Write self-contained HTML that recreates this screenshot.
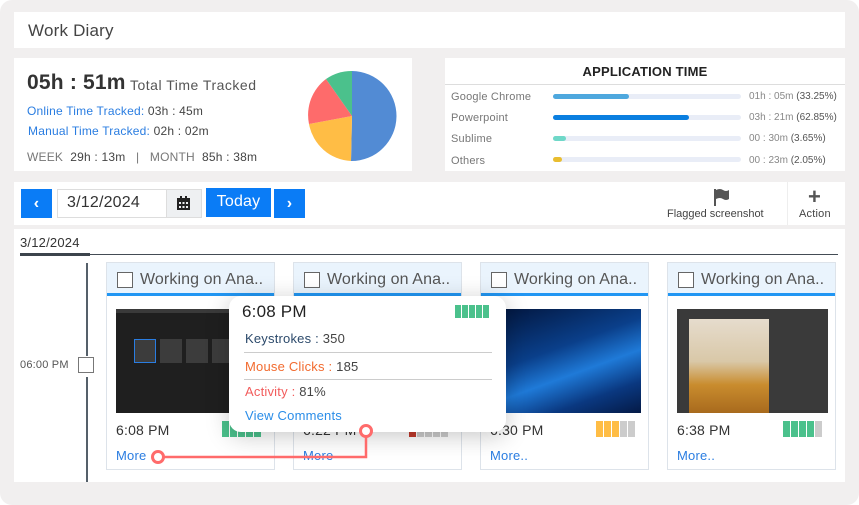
<!DOCTYPE html>
<html><head><meta charset="utf-8"><style>
*{box-sizing:border-box;margin:0;padding:0}
body{width:859px;height:505px;background:#fff;font-family:"Liberation Sans",sans-serif;position:relative;overflow:hidden;color:#333;letter-spacing:0.2px}
.bg{position:absolute;left:0;top:0;width:859px;height:505px;background:#f1efef;border-radius:12px}
.w{position:absolute;background:#fff}
.a{position:absolute;white-space:nowrap}
.btn{position:absolute;background:#0a7cf6;color:#fff;text-align:center}
.card{position:absolute;top:262px;width:169px;height:208px;border:1px solid #dde3ea;background:#fff}
.card .h{height:33px;background:#eaf4fd;border-bottom:3px solid #2196f3;position:relative}
.card .cb{position:absolute;left:10px;top:9px;width:16px;height:16px;border:1.5px solid #666;background:#fff}
.card .t{position:absolute;left:33px;top:8px;font-size:16px;color:#555;letter-spacing:0.1px}
.card .img{position:absolute;left:9px;top:46px;width:151px;height:104px;overflow:hidden}
.card .tm{position:absolute;left:9px;top:159px;font-size:14px;color:#333}
.card .mo{position:absolute;left:9px;top:185px;font-size:13px;color:#2a7de1}
.bars{position:absolute;left:115px;top:158px;display:flex;gap:1px}
.bars i{display:block;width:7px;height:16px}
.bar{position:absolute;height:5px;border-radius:3px;background:#e9edf7;left:553px;width:188px}
.bar b{display:block;height:5px;border-radius:3px}
</style></head><body>
<div class="bg"></div>
<div class="w" style="left:14px;top:12px;width:831px;height:36px"></div>
<div class="a" style="left:28px;top:21px;font-size:17px;color:#444">Work Diary</div>

<div class="w" style="left:14px;top:58px;width:398px;height:113px"></div>
<div class="a" style="left:27px;top:71px;font-size:21px;font-weight:bold;color:#333">05h : 51m</div>
<div class="a" style="left:130px;top:77px;font-size:14px;color:#555;letter-spacing:0.5px">Total Time Tracked</div>
<div class="a" style="left:27px;top:104px;font-size:12px;color:#2a7de1">Online Time Tracked: <span style="color:#444">03h : 45m</span></div>
<div class="a" style="left:28px;top:124px;font-size:12px;color:#2a7de1">Manual Time Tracked: <span style="color:#444">02h : 02m</span></div>
<div class="a" style="left:27px;top:150px;font-size:12px;color:#777">WEEK &nbsp;<span style="color:#444">29h : 13m</span> &nbsp; | &nbsp; MONTH &nbsp;<span style="color:#444">85h : 38m</span></div>
<svg class="a" style="left:306px;top:70px" width="92" height="92" viewBox="-46 -46 92 92">
<path d="M0 0L0 -45A45 45 0 0 1 -1 45Z" fill="#528bd4"/>
<path d="M0 0L-1 45A45 45 0 0 1 -43 8Z" fill="#ffbd45"/>
<path d="M0 0L-43 8A45 45 0 0 1 -26 -37Z" fill="#fe6b6b"/>
<path d="M0 0L-26 -37A45 45 0 0 1 0 -45Z" fill="#4bc18c"/>
</svg>

<div class="w" style="left:445px;top:58px;width:400px;height:113px"></div>
<div class="a" style="left:445px;top:64px;width:400px;text-align:center;font-size:13px;font-weight:bold;color:#222">APPLICATION TIME</div>
<div class="a" style="left:445px;top:84px;width:400px;height:1px;background:#ddd"></div>
<div class="a" style="left:451px;top:91px;font-size:11px;color:#777">Google Chrome</div>
<div class="a" style="left:451px;top:112px;font-size:11px;color:#777">Powerpoint</div>
<div class="a" style="left:451px;top:133px;font-size:11px;color:#777">Sublime</div>
<div class="a" style="left:451px;top:155px;font-size:11px;color:#777">Others</div>
<div class="bar" style="top:94px"><b style="width:76px;background:#4ea8de"></b></div>
<div class="bar" style="top:115px"><b style="width:136px;background:#0a7fe0"></b></div>
<div class="bar" style="top:136px"><b style="width:13px;background:#6fd8c8"></b></div>
<div class="bar" style="top:157px"><b style="width:9px;background:#e9bd2f"></b></div>
<div class="a" style="left:749px;top:91px;font-size:10px;color:#888;letter-spacing:0">01h : 05m <span style="color:#555">(33.25%)</span></div>
<div class="a" style="left:749px;top:112px;font-size:10px;color:#888;letter-spacing:0">03h : 21m <span style="color:#555">(62.85%)</span></div>
<div class="a" style="left:749px;top:133px;font-size:10px;color:#888;letter-spacing:0">00 : 30m <span style="color:#555">(3.65%)</span></div>
<div class="a" style="left:749px;top:155px;font-size:10px;color:#888;letter-spacing:0">00 : 23m <span style="color:#555">(2.05%)</span></div>

<div class="w" style="left:14px;top:182px;width:831px;height:43px"></div>
<div class="btn" style="left:21px;top:189px;width:31px;height:29px;font-size:16px;line-height:29px;font-weight:bold">‹</div>
<div class="a" style="left:57px;top:189px;width:145px;height:29px;border:1px solid #ddd;background:#fff"></div>
<div class="a" style="left:166px;top:190px;width:35px;height:27px;background:#eef0f2;border-left:1px solid #ddd"></div>
<svg class="a" style="left:177px;top:196px" width="13" height="14" viewBox="0 0 13 14"><rect x="0" y="2" width="13" height="12" fill="#222"/><rect x="3" y="0" width="2" height="3" fill="#222"/><rect x="8" y="0" width="2" height="3" fill="#222"/><g fill="#eef0f2"><rect x="2" y="6" width="2" height="2"/><rect x="5.5" y="6" width="2" height="2"/><rect x="9" y="6" width="2" height="2"/><rect x="2" y="10" width="2" height="2"/><rect x="5.5" y="10" width="2" height="2"/><rect x="9" y="10" width="2" height="2"/></g></svg>
<div class="a" style="left:67px;top:194px;font-size:16px;color:#333">3/12/2024</div>
<div class="btn" style="left:206px;top:188px;width:65px;height:29px;font-size:16px;line-height:27px">Today</div>
<div class="btn" style="left:274px;top:189px;width:31px;height:29px;font-size:16px;line-height:29px;font-weight:bold">›</div>
<svg class="a" style="left:714px;top:189px" width="16" height="17" viewBox="0 0 16 17"><rect x="0" y="0" width="2" height="17" fill="#555"/><path d="M2 1Q6 -1 9 1T15 1V10Q12 12 9 10T2 10Z" fill="#555"/></svg>
<div class="a" style="left:667px;top:208px;font-size:11px;color:#444;letter-spacing:0">Flagged screenshot</div>
<div class="a" style="left:787px;top:182px;width:1px;height:43px;background:#eee"></div>
<div class="a" style="left:808px;top:184px;font-size:22px;font-weight:bold;color:#555">+</div>
<div class="a" style="left:799px;top:208px;font-size:11px;color:#444">Action</div>

<div class="w" style="left:14px;top:229px;width:831px;height:253px"></div>
<div class="a" style="left:20px;top:235px;font-size:13px;color:#333">3/12/2024</div>
<div class="a" style="left:20px;top:254px;width:818px;height:1px;background:#444c55"></div>
<div class="a" style="left:20px;top:253px;width:70px;height:3px;background:#3c444c"></div>
<div class="a" style="left:86px;top:263px;width:1.5px;height:93px;background:#55606a"></div>
<div class="a" style="left:86px;top:377px;width:1.5px;height:105px;background:#55606a"></div>
<div class="a" style="left:78px;top:357px;width:16px;height:16px;border:1px solid #777"></div>
<div class="a" style="left:20px;top:359px;font-size:11px;color:#555">06:00 PM</div>

<div class="card" style="left:106px"><div class="h"><div class="cb"></div><div class="t">Working on Ana..</div></div>
<div class="img" style="background:#1f1f1f;border-top:4px solid #3a3a3a"><div style="position:absolute;left:18px;top:26px;width:95px;height:24px;background:repeating-linear-gradient(90deg,#3c3c3c 0 22px,#1f1f1f 22px 26px)"></div><div style="position:absolute;left:18px;top:26px;width:22px;height:24px;border:1px solid #2a7de1"></div></div>
<div class="tm">6:08 PM</div><div class="bars" style="left:115px"><i style="background:#4bc18c"></i><i style="background:#4bc18c"></i><i style="background:#4bc18c"></i><i style="background:#4bc18c"></i><i style="background:#4bc18c"></i></div><div class="mo">More</div></div>

<div class="card" style="left:293px"><div class="h"><div class="cb"></div><div class="t">Working on Ana..</div></div>
<div class="tm">6:22 PM</div><div class="bars" style="left:115px"><i style="background:#c0392b"></i><i style="background:#ccc"></i><i style="background:#ccc"></i><i style="background:#ccc"></i><i style="background:#ccc"></i></div><div class="mo">More</div></div>

<div class="card" style="left:480px"><div class="h"><div class="cb"></div><div class="t">Working on Ana..</div></div>
<div class="img" style="background:linear-gradient(160deg,#02143a 0%,#0a3f8a 40%,#1f7ad8 60%,#0a3880 80%,#041a46 100%)"></div>
<div class="tm">6:30 PM</div><div class="bars" style="left:115px"><i style="background:#ffbd45"></i><i style="background:#ffbd45"></i><i style="background:#ffbd45"></i><i style="background:#ccc"></i><i style="background:#ccc"></i></div><div class="mo">More..</div></div>

<div class="card" style="left:667px"><div class="h"><div class="cb"></div><div class="t">Working on Ana..</div></div>
<div class="img" style="background:#3a3a3a"><div style="position:absolute;left:12px;top:10px;width:80px;height:94px;background:linear-gradient(180deg,#e6dccd 0%,#d9c8a8 45%,#c98c2e 70%,#a86a1d 100%)"></div></div>
<div class="tm">6:38 PM</div><div class="bars" style="left:115px"><i style="background:#4bc18c"></i><i style="background:#4bc18c"></i><i style="background:#4bc18c"></i><i style="background:#4bc18c"></i><i style="background:#ccc"></i></div><div class="mo">More..</div></div>

<div class="a" style="left:229px;top:296px;width:277px;height:136px;background:#fff;border-radius:12px;box-shadow:0 4px 24px rgba(0,0,0,.22)"></div>
<div class="a" style="left:242px;top:302px;font-size:17px;color:#222">6:08 PM</div>
<div class="bars" style="left:455px;top:305px;position:absolute;gap:1px"><i style="background:#4bc18c;width:6px;height:13px"></i><i style="background:#4bc18c;width:6px;height:13px"></i><i style="background:#4bc18c;width:6px;height:13px"></i><i style="background:#4bc18c;width:6px;height:13px"></i><i style="background:#4bc18c;width:6px;height:13px"></i></div>
<div class="a" style="left:245px;top:331px;font-size:13px;color:#2c4a6b">Keystrokes : <span style="color:#444">350</span></div>
<div class="a" style="left:244px;top:352px;width:248px;height:1px;background:#ccc"></div>
<div class="a" style="left:245px;top:359px;font-size:13px;color:#f26b2f">Mouse Clicks : <span style="color:#444">185</span></div>
<div class="a" style="left:244px;top:379px;width:248px;height:1px;background:#ccc"></div>
<div class="a" style="left:245px;top:384px;font-size:13px;color:#f25c5c">Activity : <span style="color:#444">81%</span></div>
<div class="a" style="left:245px;top:408px;font-size:13px;color:#2a8de8">View Comments</div>

<svg class="a" style="left:0;top:0" width="859" height="505"><path d="M158 457H366V431" fill="none" stroke="#ff6b6b" stroke-width="2.5"/><circle cx="158" cy="457" r="5.5" fill="#fff" stroke="#ff6b6b" stroke-width="3"/><circle cx="366" cy="431" r="5.5" fill="#fff" stroke="#ff6b6b" stroke-width="3"/></svg>
</body></html>
